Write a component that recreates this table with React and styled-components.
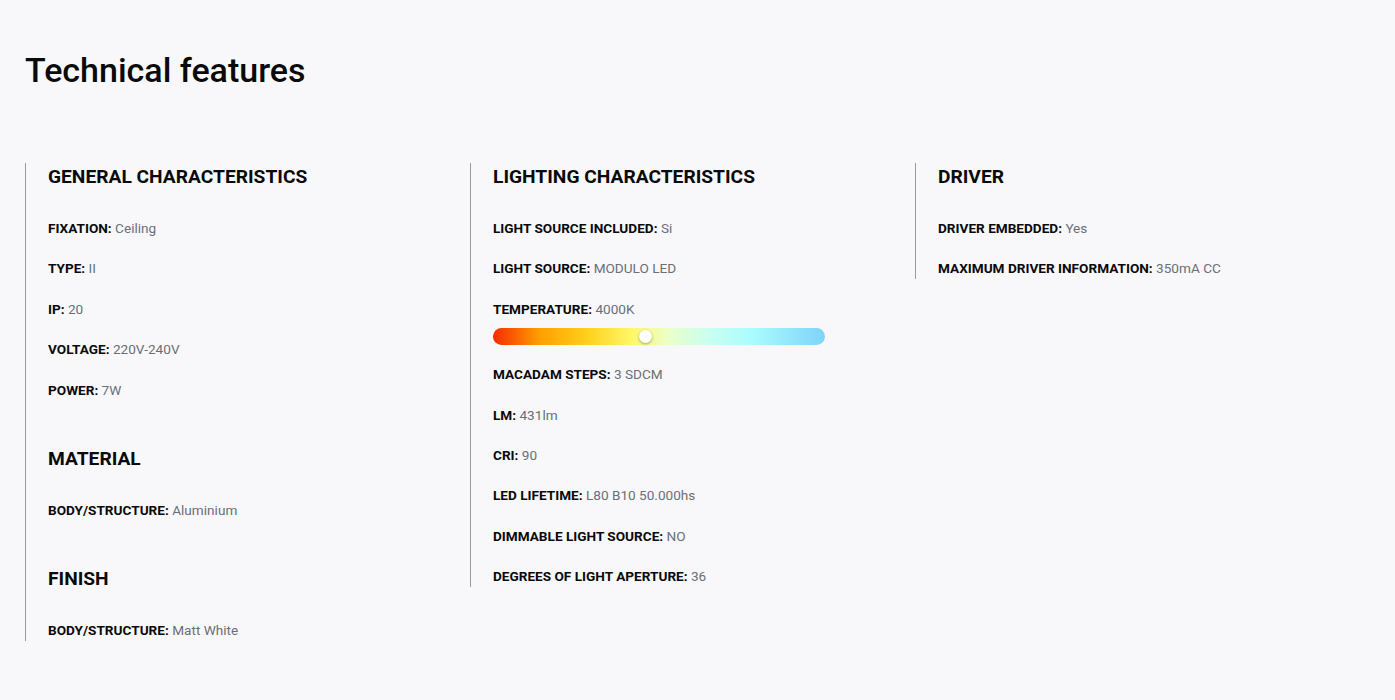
import React from 'react';
import styled, { createGlobalStyle } from 'styled-components';

const GlobalStyle = createGlobalStyle`
  body {
    margin: 0;
    background: #f8f8fa;
    font-family: Roboto, 'Liberation Sans', sans-serif;
    color: #0a0a0a;
  }
`;

const Page = styled.div`
  padding: 50px 25px 0;
`;

const Title = styled.h1`
  font-size: 34px;
  font-weight: 500;
  line-height: 40px;
  margin: 0 0 73px;
`;

const Columns = styled.div`
  display: grid;
  grid-template-columns: repeat(3, 445px);
  align-items: start;
`;

const Column = styled.div`
  border-left: 1px solid #9a9a9a;
  padding: 3px 0 0 22px;
  display: flex;
  flex-direction: column;
`;

const Section = styled.section`
  display: flex;
  flex-direction: column;
  & + & {
    margin-top: 48px;
  }
`;

const Heading = styled.h2`
  font-size: 19.2px;
  font-weight: 700;
  line-height: 22px;
  margin: 0 0 30px;
`;

const Item = styled.p`
  font-size: 13.6px;
  line-height: 1.5;
  margin: 0;
  & + & {
    margin-top: 20px;
  }
`;

const Label = styled.strong`
  font-weight: 700;
`;

const Value = styled.span`
  color: #6b6f78;
`;

const Bar = styled.div`
  position: relative;
  width: 332px;
  height: 17px;
  margin: 9px 0 19px;
  border-radius: 9px;
  background: linear-gradient(
    90deg,
    #f52a00 0%,
    #ff9e00 14%,
    #ffcf1a 28%,
    #fff86a 42%,
    #ecffc4 52%,
    #ccffee 64%,
    #aafcff 78%,
    #7fd3f8 100%
  );
`;

const Knob = styled.span`
  position: absolute;
  top: 50%;
  width: 13px;
  height: 13px;
  margin: -6.5px 0 0 -6.5px;
  border-radius: 50%;
  background: #fff;
  box-shadow: 0 1px 3px rgba(0, 0, 0, 0.35);
`;

const columns = [
  [
    {
      title: 'GENERAL CHARACTERISTICS',
      items: [
        ['FIXATION', 'Ceiling'],
        ['TYPE', 'II'],
        ['IP', '20'],
        ['VOLTAGE', '220V-240V'],
        ['POWER', '7W'],
      ],
    },
    { title: 'MATERIAL', items: [['BODY/STRUCTURE', 'Aluminium']] },
    { title: 'FINISH', items: [['BODY/STRUCTURE', 'Matt White']] },
  ],
  [
    {
      title: 'LIGHTING CHARACTERISTICS',
      items: [
        ['LIGHT SOURCE INCLUDED', 'Si'],
        ['LIGHT SOURCE', 'MODULO LED'],
        ['TEMPERATURE', '4000K', 0.46],
        ['MACADAM STEPS', '3 SDCM'],
        ['LM', '431lm'],
        ['CRI', '90'],
        ['LED LIFETIME', 'L80 B10 50.000hs'],
        ['DIMMABLE LIGHT SOURCE', 'NO'],
        ['DEGREES OF LIGHT APERTURE', '36'],
      ],
    },
  ],
  [
    {
      title: 'DRIVER',
      items: [
        ['DRIVER EMBEDDED', 'Yes'],
        ['MAXIMUM DRIVER INFORMATION', '350mA CC'],
      ],
    },
  ],
];

const Row = ({ label, value, temp }) => (
  <>
    <Item>
      <Label>{label}:</Label> <Value>{value}</Value>
    </Item>
    {temp !== undefined && (
      <Bar>
        <Knob style={{ left: `${temp * 100}%` }} />
      </Bar>
    )}
  </>
);

export default function App() {
  return (
    <Page>
      <GlobalStyle />
      <Title>Technical features</Title>
      <Columns>
        {columns.map((sections, i) => (
          <Column key={i}>
            {sections.map((s) => (
              <Section key={s.title}>
                <Heading>{s.title}</Heading>
                {s.items.map(([label, value, temp]) => (
                  <Row key={label} label={label} value={value} temp={temp} />
                ))}
              </Section>
            ))}
          </Column>
        ))}
      </Columns>
    </Page>
  );
}
